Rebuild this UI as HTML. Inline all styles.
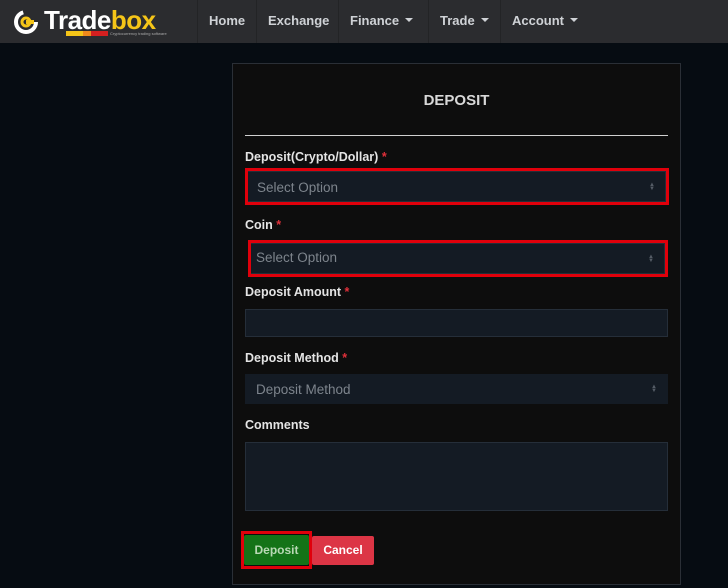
<!DOCTYPE html>
<html><head><style>
*{box-sizing:border-box;margin:0;padding:0}
body{width:728px;height:588px;background:#060c12;font-family:"Liberation Sans",sans-serif;position:relative;overflow:hidden}
.nav{position:absolute;left:0;top:0;width:728px;height:43px;background:#2b2c2f}
.nav .it{position:absolute;top:0;height:43px;line-height:42px;color:#cfd2d6;font-weight:bold;font-size:13px;border-left:1px solid #232426;padding-left:11px}
.car{display:inline-block;border-left:4px solid transparent;border-right:4px solid transparent;border-top:4px solid #cfd2d6;vertical-align:middle;margin-left:6px;margin-top:-3px}
.card{position:absolute;left:232px;top:63px;width:449px;height:522px;background:#0d0d0d;border:1px solid #2a2f36}
.abs{position:absolute}
.lbl{position:absolute;left:245px;color:#e4e4e4;font-size:12.5px;font-weight:bold}
.lbl b{color:#e0303a}
.inp{position:absolute;background:#141b24;border:1px solid #252e39;color:#7d848c;font-size:13.5px;padding-left:9px}
.red{position:absolute;border:3px solid #e0000b}
.arr{position:absolute;right:10px;top:50%;margin-top:-4px;color:#555c66;font-size:6px;line-height:4px}
</style></head><body>
<div class="nav">
  <svg class="abs" style="left:12px;top:8px" width="30" height="28" viewBox="0 0 30 28"><circle cx="14" cy="14" r="10" fill="none" stroke="#fff" stroke-width="4" stroke-dasharray="44 20"/><path d="M14 14h8" stroke="#f5c518" stroke-width="4"/><circle cx="14" cy="14" r="4" fill="none" stroke="#f5c518" stroke-width="3"/></svg>
  <div class="abs" style="left:44px;top:5px;font-size:26px;font-weight:bold;color:#fff;letter-spacing:-0.5px">Trade<span style="color:#f5c518">box</span></div>
  <div class="abs" style="left:66px;top:31px;width:42px;height:5px;background:linear-gradient(90deg,#f5c518 0 40%,#f08a1c 40% 60%,#d42020 60%)"></div>
  <div class="abs" style="left:110px;top:31px;font-size:4px;color:#aaa">Cryptocurrency trading software</div>
  <div class="it" style="left:197px;width:59px">Home</div>
  <div class="it" style="left:256px;width:82px">Exchange</div>
  <div class="it" style="left:338px;width:90px">Finance<span class="car"></span></div>
  <div class="it" style="left:428px;width:73px">Trade<span class="car"></span></div>
  <div class="it" style="left:500px;width:90px">Account<span class="car"></span></div>
</div>
<div class="card"></div>
<div class="abs" style="left:232px;width:449px;top:92px;text-align:center;color:#d8d8d8;font-size:15px;font-weight:bold">DEPOSIT</div>
<div class="abs" style="left:245px;top:135px;width:423px;height:1px;background:#d0d0d0"></div>

<div class="lbl" style="top:150px">Deposit(Crypto/Dollar) <b>*</b></div>
<div class="inp" style="left:247px;top:171px;width:419px;height:31px;line-height:32px">Select Option<div class="arr">▲<br>▼</div></div>
<div class="red" style="left:245px;top:168px;width:424px;height:37px"></div>

<div class="lbl" style="top:218px">Coin <b>*</b></div>
<div class="inp" style="left:250px;top:243px;width:415px;height:31px;line-height:27px;padding-left:5px">Select Option<div class="arr">▲<br>▼</div></div>
<div class="red" style="left:248px;top:240px;width:420px;height:37px"></div>

<div class="lbl" style="top:285px">Deposit Amount <b>*</b></div>
<div class="inp" style="left:245px;top:309px;width:423px;height:28px"></div>

<div class="lbl" style="top:351px">Deposit Method <b>*</b></div>
<div class="inp" style="left:245px;top:374px;width:423px;height:30px;line-height:30px;padding-left:10px;border-color:#141b24">Deposit Method<div class="arr">▲<br>▼</div></div>

<div class="lbl" style="top:418px">Comments</div>
<div class="inp" style="left:245px;top:442px;width:423px;height:69px"></div>

<div class="abs" style="left:244px;top:535px;width:65px;height:30px;background:#147317;border-radius:2px;color:#b9d9b5;font-size:12px;font-weight:bold;text-align:center;line-height:30px">Deposit</div>
<div class="red" style="left:241px;top:531px;width:71px;height:38px"></div>
<div class="abs" style="left:312px;top:536px;width:62px;height:29px;background:#dc3545;border-radius:2px;color:#fff;font-size:12px;font-weight:bold;text-align:center;line-height:29px">Cancel</div>
</body></html>
